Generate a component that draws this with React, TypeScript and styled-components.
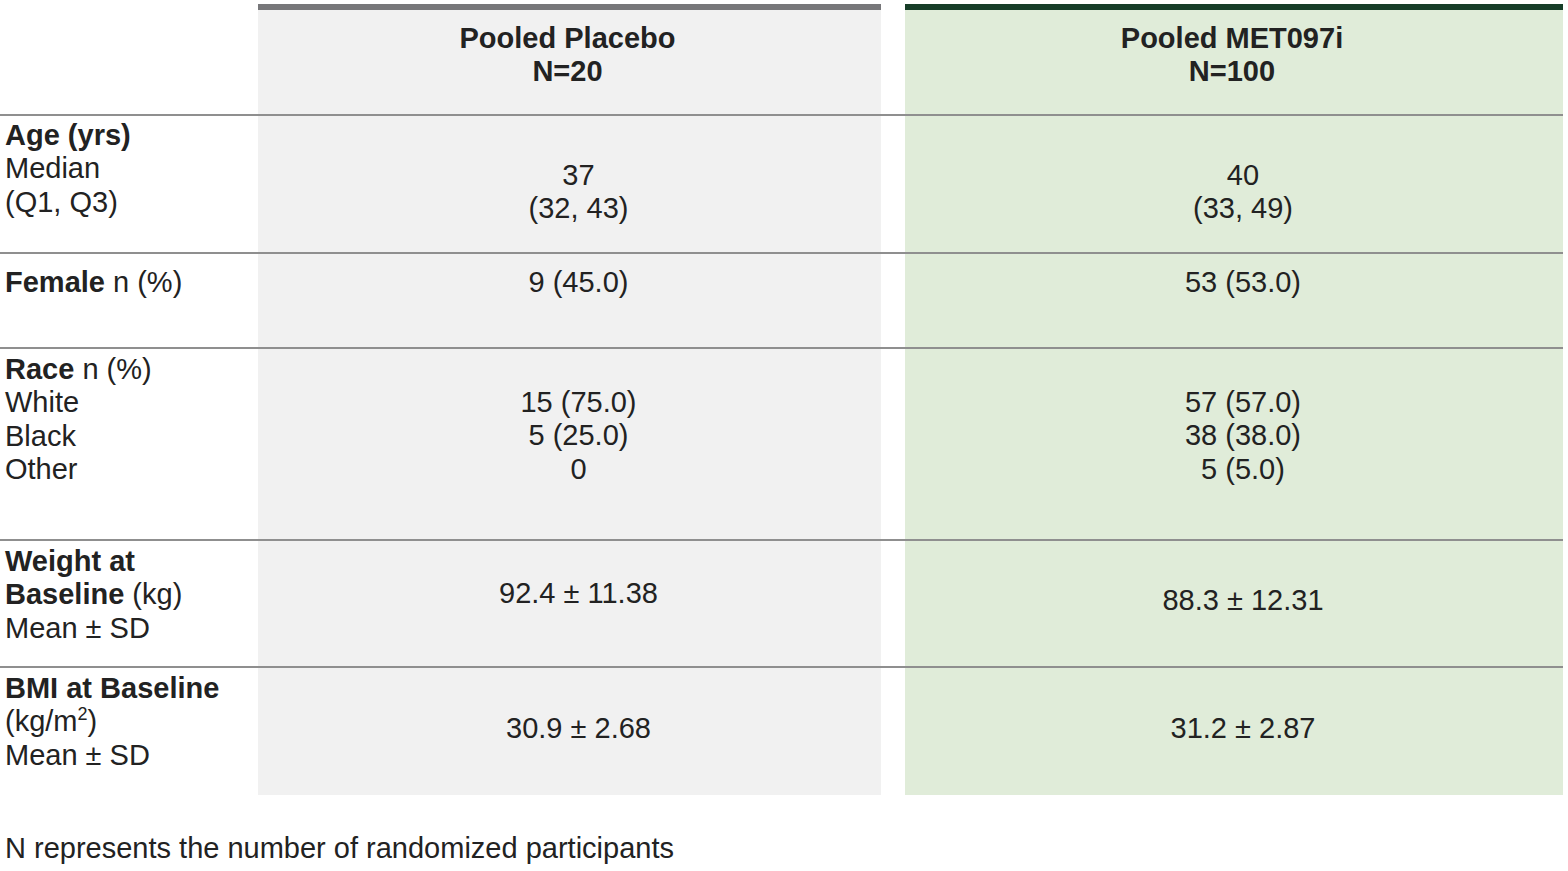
import React from "react";
import styled, { createGlobalStyle } from "styled-components";

const Global = createGlobalStyle`
  html, body { margin: 0; padding: 0; background: #ffffff; }
  body { font-family: "Liberation Sans", Arial, sans-serif; color: #222222; }
`;

const Page = styled.div`
  padding-top: 4px;
  width: 1568px;
`;

const Table = styled.div`
  width: 1563px;
  display: flex;
  flex-direction: column;
`;

const Row = styled.div<{ $h: number; $header?: boolean }>`
  display: grid;
  grid-template-columns: 258px 623px 24px 658px;
  height: ${(p) => p.$h}px;
  box-sizing: border-box;
  border-top: ${(p) => (p.$header ? "none" : "2px solid #8f8f8f")};
`;

const Cell = styled.div<{ $bg?: string; $pt: number; $bar?: string }>`
  background: ${(p) => p.$bg || "transparent"};
  padding-top: ${(p) => p.$pt}px;
  box-sizing: border-box;
  font-size: 29px;
  line-height: 33.4px;
  border-top: ${(p) => (p.$bar ? `6px solid ${p.$bar}` : "none")};
`;

const LabelCell = styled(Cell)`
  padding-left: 5px;
  text-align: left;
`;

const ValueCell = styled(Cell)`
  text-align: center;
  padding-left: 18px;
`;

const HeadCell = styled(Cell)`
  text-align: center;
  font-weight: 700;
  padding-right: 4px;
`;

const Gap = styled.div``;

const B = styled.b`
  font-weight: 700;
`;

const Line = styled.div``;

const Sup = styled.sup`
  font-size: 18px;
  line-height: 0;
  vertical-align: 11px;
`;

const Footnote = styled.div`
  margin-top: 37px;
  padding-left: 5px;
  font-size: 29px;
  line-height: 33.4px;
`;

const GRAY = "#f1f1f1";
const GREEN = "#e0ecd9";

type RowDef = {
  h: number;
  labelPt: number;
  label: React.ReactNode;
  aPt: number;
  a: React.ReactNode;
  bPt: number;
  b: React.ReactNode;
};

const rows: RowDef[] = [
  {
    h: 138,
    labelPt: 3,
    label: (
      <>
        <Line><B>Age (yrs)</B></Line>
        <Line>Median</Line>
        <Line>(Q1, Q3)</Line>
      </>
    ),
    aPt: 43,
    a: (
      <>
        <Line>37</Line>
        <Line>(32, 43)</Line>
      </>
    ),
    bPt: 43,
    b: (
      <>
        <Line>40</Line>
        <Line>(33, 49)</Line>
      </>
    ),
  },
  {
    h: 95,
    labelPt: 12,
    label: (
      <Line>
        <B>Female</B> n (%)
      </Line>
    ),
    aPt: 12,
    a: <Line>9 (45.0)</Line>,
    bPt: 12,
    b: <Line>53 (53.0)</Line>,
  },
  {
    h: 192,
    labelPt: 4,
    label: (
      <>
        <Line>
          <B>Race</B> n (%)
        </Line>
        <Line>White</Line>
        <Line>Black</Line>
        <Line>Other</Line>
      </>
    ),
    aPt: 37,
    a: (
      <>
        <Line>15 (75.0)</Line>
        <Line>5 (25.0)</Line>
        <Line>0</Line>
      </>
    ),
    bPt: 37,
    b: (
      <>
        <Line>57 (57.0)</Line>
        <Line>38 (38.0)</Line>
        <Line>5 (5.0)</Line>
      </>
    ),
  },
  {
    h: 127,
    labelPt: 4,
    label: (
      <>
        <Line><B>Weight at</B></Line>
        <Line>
          <B>Baseline</B> (kg)
        </Line>
        <Line>Mean ± SD</Line>
      </>
    ),
    aPt: 36,
    a: <Line>92.4 ± 11.38</Line>,
    bPt: 43,
    b: <Line>88.3 ± 12.31</Line>,
  },
  {
    h: 129,
    labelPt: 4,
    label: (
      <>
        <Line><B>BMI at Baseline</B></Line>
        <Line>
          (kg/m<Sup>2</Sup>)
        </Line>
        <Line>Mean ± SD</Line>
      </>
    ),
    aPt: 44,
    a: <Line>30.9 ± 2.68</Line>,
    bPt: 44,
    b: <Line>31.2 ± 2.87</Line>,
  },
];

export default function App() {
  return (
    <Page>
      <Global />
      <Table>
        <Row $h={110} $header>
          <LabelCell $pt={0} />
          <HeadCell $bg={GRAY} $bar="#77777a" $pt={12}>
            <Line>Pooled Placebo</Line>
            <Line>N=20</Line>
          </HeadCell>
          <Gap />
          <HeadCell $bg={GREEN} $bar="#173d28" $pt={12}>
            <Line>Pooled MET097i</Line>
            <Line>N=100</Line>
          </HeadCell>
        </Row>
        {rows.map((r, i) => (
          <Row key={i} $h={r.h}>
            <LabelCell $pt={r.labelPt}>{r.label}</LabelCell>
            <ValueCell $bg={GRAY} $pt={r.aPt}>{r.a}</ValueCell>
            <Gap />
            <ValueCell $bg={GREEN} $pt={r.bPt}>{r.b}</ValueCell>
          </Row>
        ))}
      </Table>
      <Footnote>N represents the number of randomized participants</Footnote>
    </Page>
  );
}
